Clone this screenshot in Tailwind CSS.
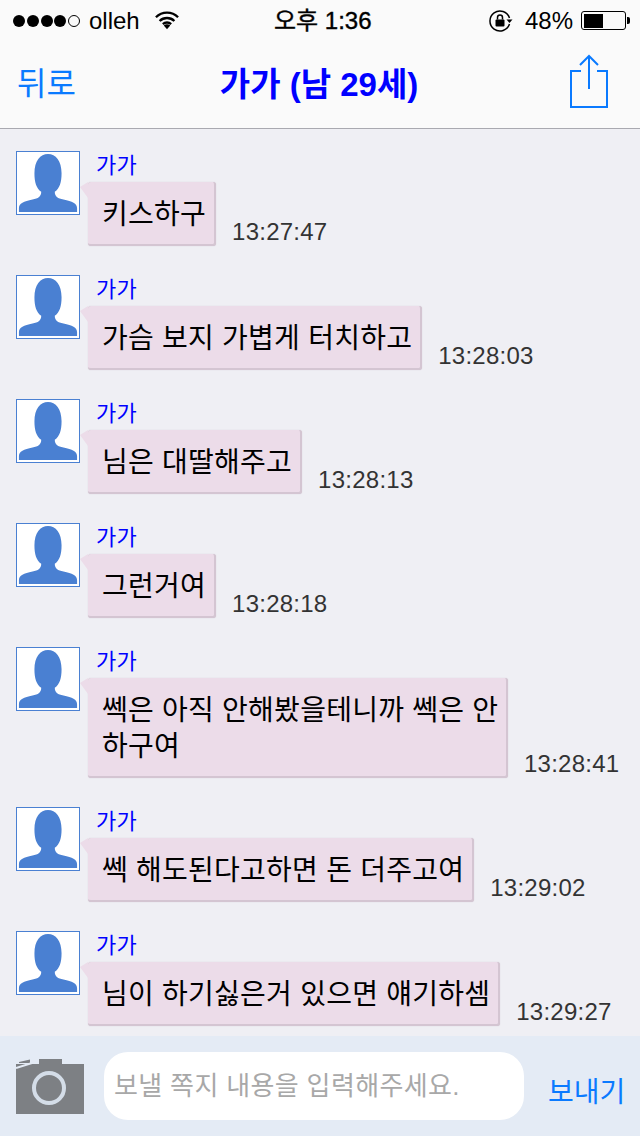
<!DOCTYPE html>
<html lang="ko">
<head>
<meta charset="utf-8">
<script src="https://cdn.jsdelivr.net/npm/@tailwindcss/browser@4"></script>
</head>
<body class="m-0">
<div class="w-[640px] h-[1136px] overflow-hidden flex flex-col bg-[#efeff4] font-['Liberation_Sans','Noto_Sans_CJK_KR',sans-serif]">
  <header class="h-[129px] shrink-0 bg-[#fafafa] border-b border-[#a9a9b0] flex flex-col">
    <div class="h-10 pt-[1px] flex items-center relative text-black text-[24px]">
      <div class="flex items-center gap-[1.75px] ml-[13px]">
        <span class="w-3 h-3 rounded-full bg-black"></span>
        <span class="w-3 h-3 rounded-full bg-black"></span>
        <span class="w-3 h-3 rounded-full bg-black"></span>
        <span class="w-3 h-3 rounded-full bg-black"></span>
        <span class="w-3 h-3 rounded-full border border-black"></span>
      </div>
      <span class="ml-[9px]">olleh</span>
      <svg class="ml-[15px]" width="24" height="19" viewBox="0 0 26 20"><path d="M1 6.500a17 17 0 0 1 24 0M5 10.500a11.500 11.500 0 0 1 16 0M8.500 14a6.500 6.500 0 0 1 9 0" fill="none" stroke="#000" stroke-width="2.500"/><path d="M13 19.500l-3.500-4a5 5 0 0 1 7 0z"/></svg>
      <span class="absolute left-[274px] [-webkit-text-stroke:0.4px_#000]">오후 1:36</span>
      <div class="absolute left-[489px] flex items-center">
        <svg width="25" height="22" viewBox="0 0 25 22"><path d="M20.500 14a10 10 0 1 1 0-6" fill="none" stroke="#000" stroke-width="1.500"/><path d="M17.500 9.500h6l-3 3.500z"/><rect x="6.500" y="9.500" width="9" height="7" rx="1"/><path d="M8.500 9.500v-2a2.500 2.500 0 0 1 5 0v2" fill="none" stroke="#000" stroke-width="1.500"/></svg>
        <span class="ml-[11px]">48%</span>
        <div class="ml-[8px] w-[45px] h-[19px] rounded-[3px] border border-black p-[1.500px]"><div class="w-[19px] h-full bg-black"></div></div>
        <div class="ml-[1px] w-[3px] h-[7px] bg-black rounded-r-[2px]"></div>
      </div>
    </div>
    <div class="flex-1 relative flex items-center justify-center">
      <span class="absolute left-[17px] top-[24px] text-[32px] leading-[40px] text-[#0a7aff]">뒤로</span>
      <span class="text-[33px] leading-[40px] font-bold text-[#0000ff] -ml-[2px] mt-[2px]">가가 (남 29세)</span>
      <svg class="absolute left-[569px] top-[14px]" width="40" height="54" viewBox="0 0 40 54" fill="none" stroke="#0a7aff" stroke-width="2"><path d="M12 17H2v36h36V17H28M20 35V3M11 11l9-9 9 9"/></svg>
    </div>
  </header>

  <main class="flex-1 min-h-0 overflow-hidden flex flex-col pt-[22px] pl-4 gap-[29px]">
    <div class="flex gap-2">
      <svg class="w-16 h-16 shrink-0 bg-white border border-[#4a80d2]" viewBox="0 0 64 64"><path d="M2 62v-4c0-5 5-7 14-9 6-1 9-3 9-8-5-3-7-10-7-19C18 9 24 2 32 2s14 7 14 20c0 9-2 16-7 19 0 5 3 7 9 8 9 2 14 4 14 9v4z" fill="#4a80d2"/></svg>
      <div class="flex flex-col items-start">
        <span class="ml-2 text-[22px] leading-[30px] mb-[1px] tracking-[0.25px] text-[#0000ff]">가가</span>
        <div class="flex items-end">
          <div class="relative bg-[#ecdce9] rounded-[3px] border-b-2 border-r-2 border-[#d4c5d2] shadow-[0_0_1px_#c9bcc8] pl-[14px] pr-[8px] pt-[15px] pb-[11px] text-[28px] leading-[36px] tracking-[0.25px] text-black whitespace-nowrap"><span class="absolute -left-[8px] top-0 w-0 h-0 border-t-[5px] border-t-transparent border-r-[8px] border-r-[#ecdce9] border-b-[11px] border-b-transparent"></span>키스하구</div>
          <span class="ml-4 text-[24px] leading-[28px] tracking-[0.25px] text-[#333]">13:27:47</span>
        </div>
      </div>
    </div>
    <div class="flex gap-2">
      <svg class="w-16 h-16 shrink-0 bg-white border border-[#4a80d2]" viewBox="0 0 64 64"><path d="M2 62v-4c0-5 5-7 14-9 6-1 9-3 9-8-5-3-7-10-7-19C18 9 24 2 32 2s14 7 14 20c0 9-2 16-7 19 0 5 3 7 9 8 9 2 14 4 14 9v4z" fill="#4a80d2"/></svg>
      <div class="flex flex-col items-start">
        <span class="ml-2 text-[22px] leading-[30px] mb-[1px] tracking-[0.25px] text-[#0000ff]">가가</span>
        <div class="flex items-end">
          <div class="relative bg-[#ecdce9] rounded-[3px] border-b-2 border-r-2 border-[#d4c5d2] shadow-[0_0_1px_#c9bcc8] pl-[14px] pr-[8px] pt-[15px] pb-[11px] text-[28px] leading-[36px] tracking-[0.25px] text-black whitespace-nowrap"><span class="absolute -left-[8px] top-0 w-0 h-0 border-t-[5px] border-t-transparent border-r-[8px] border-r-[#ecdce9] border-b-[11px] border-b-transparent"></span>가슴 보지 가볍게 터치하고</div>
          <span class="ml-4 text-[24px] leading-[28px] tracking-[0.25px] text-[#333]">13:28:03</span>
        </div>
      </div>
    </div>
    <div class="flex gap-2">
      <svg class="w-16 h-16 shrink-0 bg-white border border-[#4a80d2]" viewBox="0 0 64 64"><path d="M2 62v-4c0-5 5-7 14-9 6-1 9-3 9-8-5-3-7-10-7-19C18 9 24 2 32 2s14 7 14 20c0 9-2 16-7 19 0 5 3 7 9 8 9 2 14 4 14 9v4z" fill="#4a80d2"/></svg>
      <div class="flex flex-col items-start">
        <span class="ml-2 text-[22px] leading-[30px] mb-[1px] tracking-[0.25px] text-[#0000ff]">가가</span>
        <div class="flex items-end">
          <div class="relative bg-[#ecdce9] rounded-[3px] border-b-2 border-r-2 border-[#d4c5d2] shadow-[0_0_1px_#c9bcc8] pl-[14px] pr-[8px] pt-[15px] pb-[11px] text-[28px] leading-[36px] tracking-[0.25px] text-black whitespace-nowrap"><span class="absolute -left-[8px] top-0 w-0 h-0 border-t-[5px] border-t-transparent border-r-[8px] border-r-[#ecdce9] border-b-[11px] border-b-transparent"></span>님은 대딸해주고</div>
          <span class="ml-4 text-[24px] leading-[28px] tracking-[0.25px] text-[#333]">13:28:13</span>
        </div>
      </div>
    </div>
    <div class="flex gap-2">
      <svg class="w-16 h-16 shrink-0 bg-white border border-[#4a80d2]" viewBox="0 0 64 64"><path d="M2 62v-4c0-5 5-7 14-9 6-1 9-3 9-8-5-3-7-10-7-19C18 9 24 2 32 2s14 7 14 20c0 9-2 16-7 19 0 5 3 7 9 8 9 2 14 4 14 9v4z" fill="#4a80d2"/></svg>
      <div class="flex flex-col items-start">
        <span class="ml-2 text-[22px] leading-[30px] mb-[1px] tracking-[0.25px] text-[#0000ff]">가가</span>
        <div class="flex items-end">
          <div class="relative bg-[#ecdce9] rounded-[3px] border-b-2 border-r-2 border-[#d4c5d2] shadow-[0_0_1px_#c9bcc8] pl-[14px] pr-[8px] pt-[15px] pb-[11px] text-[28px] leading-[36px] tracking-[0.25px] text-black whitespace-nowrap"><span class="absolute -left-[8px] top-0 w-0 h-0 border-t-[5px] border-t-transparent border-r-[8px] border-r-[#ecdce9] border-b-[11px] border-b-transparent"></span>그런거여</div>
          <span class="ml-4 text-[24px] leading-[28px] tracking-[0.25px] text-[#333]">13:28:18</span>
        </div>
      </div>
    </div>
    <div class="flex gap-2">
      <svg class="w-16 h-16 shrink-0 bg-white border border-[#4a80d2]" viewBox="0 0 64 64"><path d="M2 62v-4c0-5 5-7 14-9 6-1 9-3 9-8-5-3-7-10-7-19C18 9 24 2 32 2s14 7 14 20c0 9-2 16-7 19 0 5 3 7 9 8 9 2 14 4 14 9v4z" fill="#4a80d2"/></svg>
      <div class="flex flex-col items-start">
        <span class="ml-2 text-[22px] leading-[30px] mb-[1px] tracking-[0.25px] text-[#0000ff]">가가</span>
        <div class="flex items-end">
          <div class="relative w-[420px] bg-[#ecdce9] rounded-[3px] border-b-2 border-r-2 border-[#d4c5d2] shadow-[0_0_1px_#c9bcc8] pl-[14px] pr-[8px] pt-[15px] pb-[11px] text-[28px] leading-[36px] tracking-[0.25px] text-black whitespace-nowrap"><span class="absolute -left-[8px] top-0 w-0 h-0 border-t-[5px] border-t-transparent border-r-[8px] border-r-[#ecdce9] border-b-[11px] border-b-transparent"></span>쎅은 아직 안해봤을테니까 쎅은 안<br>하구여</div>
          <span class="ml-4 text-[24px] leading-[28px] tracking-[0.25px] text-[#333]">13:28:41</span>
        </div>
      </div>
    </div>
    <div class="flex gap-2">
      <svg class="w-16 h-16 shrink-0 bg-white border border-[#4a80d2]" viewBox="0 0 64 64"><path d="M2 62v-4c0-5 5-7 14-9 6-1 9-3 9-8-5-3-7-10-7-19C18 9 24 2 32 2s14 7 14 20c0 9-2 16-7 19 0 5 3 7 9 8 9 2 14 4 14 9v4z" fill="#4a80d2"/></svg>
      <div class="flex flex-col items-start">
        <span class="ml-2 text-[22px] leading-[30px] mb-[1px] tracking-[0.25px] text-[#0000ff]">가가</span>
        <div class="flex items-end">
          <div class="relative bg-[#ecdce9] rounded-[3px] border-b-2 border-r-2 border-[#d4c5d2] shadow-[0_0_1px_#c9bcc8] pl-[14px] pr-[8px] pt-[15px] pb-[11px] text-[28px] leading-[36px] tracking-[0.25px] text-black whitespace-nowrap"><span class="absolute -left-[8px] top-0 w-0 h-0 border-t-[5px] border-t-transparent border-r-[8px] border-r-[#ecdce9] border-b-[11px] border-b-transparent"></span>쎅 해도된다고하면 돈 더주고여</div>
          <span class="ml-4 text-[24px] leading-[28px] tracking-[0.25px] text-[#333]">13:29:02</span>
        </div>
      </div>
    </div>
    <div class="flex gap-2">
      <svg class="w-16 h-16 shrink-0 bg-white border border-[#4a80d2]" viewBox="0 0 64 64"><path d="M2 62v-4c0-5 5-7 14-9 6-1 9-3 9-8-5-3-7-10-7-19C18 9 24 2 32 2s14 7 14 20c0 9-2 16-7 19 0 5 3 7 9 8 9 2 14 4 14 9v4z" fill="#4a80d2"/></svg>
      <div class="flex flex-col items-start">
        <span class="ml-2 text-[22px] leading-[30px] mb-[1px] tracking-[0.25px] text-[#0000ff]">가가</span>
        <div class="flex items-end">
          <div class="relative bg-[#ecdce9] rounded-[3px] border-b-2 border-r-2 border-[#d4c5d2] shadow-[0_0_1px_#c9bcc8] pl-[14px] pr-[8px] pt-[15px] pb-[11px] text-[28px] leading-[36px] tracking-[0.25px] text-black whitespace-nowrap"><span class="absolute -left-[8px] top-0 w-0 h-0 border-t-[5px] border-t-transparent border-r-[8px] border-r-[#ecdce9] border-b-[11px] border-b-transparent"></span>님이 하기싫은거 있으면 얘기하셈</div>
          <span class="ml-4 text-[24px] leading-[28px] tracking-[0.25px] text-[#333]">13:29:27</span>
        </div>
      </div>
    </div>
  </main>

  <footer class="h-[100px] shrink-0 bg-[#e4ebf5] flex items-center">
    <svg class="ml-4 shrink-0" width="68" height="56" viewBox="0 0 68 56"><path d="M0 6h23V1h23v5h22v50H0z" fill="#7d8084"/><path d="M3 4l11-2.500V5H3z" fill="#7d8084"/><path d="M0 10L16 5" stroke="#e4ebf5" stroke-width="2"/><circle cx="33" cy="30" r="15" fill="none" stroke="#d4dde8" stroke-width="4"/></svg>
    <div class="ml-[20px] w-[420px] h-[68px] bg-white rounded-[24px] flex items-center pl-[10px] text-[26px] tracking-[0.35px] text-[#a8a8a8]">보낼 쪽지 내용을 입력해주세요.</div>
    <span class="ml-[24px] mt-[14px] text-[28px] text-[#0a7aff]">보내기</span>
  </footer>
</div>
</body>
</html>
